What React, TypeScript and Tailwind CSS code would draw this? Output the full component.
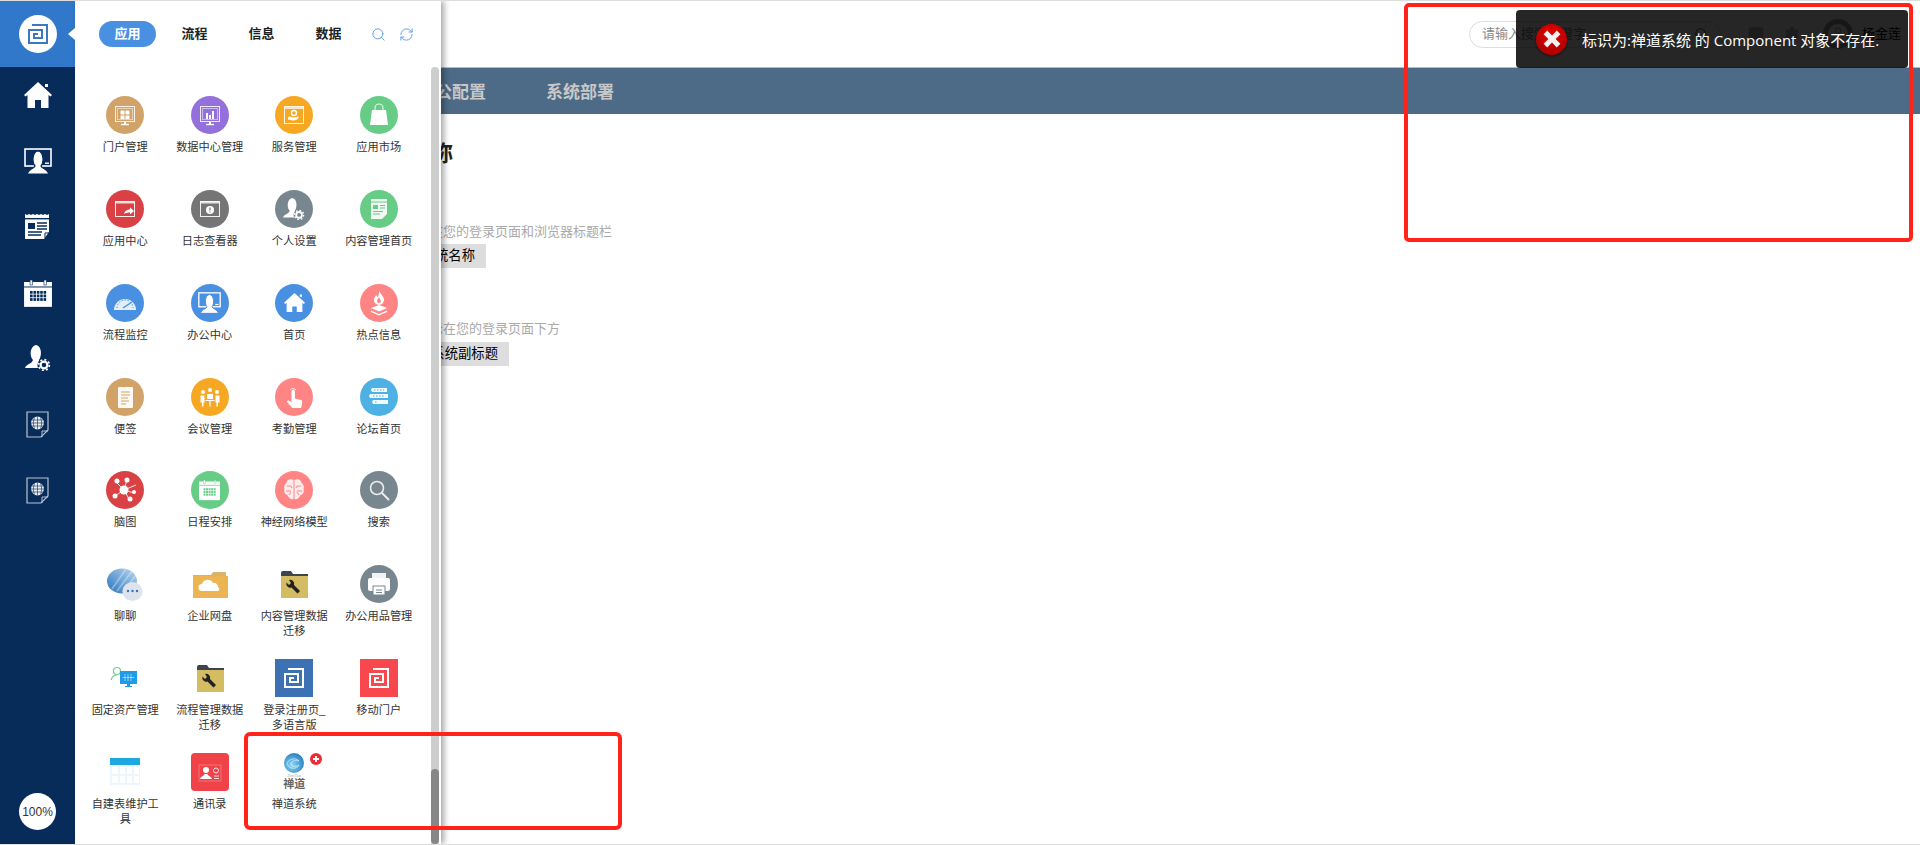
import React from 'react';
import { RefreshCw, Search, Settings, MessageSquare, User } from 'lucide-react';

const font = 'font-["Liberation_Sans","Noto_Sans_CJK_SC",sans-serif]';

function Spiral({ color = '#3a78c3', size = 22, width = 2 }: { color?: string; size?: number; width?: number }) {
  return (
    <svg width={size} height={size} viewBox="0 0 22 22" fill="none" stroke={color} strokeWidth={width}>
      <path d="M5 2 H20 V20 H2 V7 H15 V15 H7 V11 H11" />
    </svg>
  );
}

function HomeIcon({ size = 28 }: { size?: number }) {
  return (
    <svg width={size} height={size * 0.93} viewBox="0 0 28 26" fill="#fff">
      <path d="M14 0 L0 13 L1.5 14.5 L3.5 13 V26 H11 V18 H17 V26 H24.5 V13 L26.5 14.5 L28 13 Z" />
      <rect x="21" y="2" width="3" height="3" />
    </svg>
  );
}

function MonitorUser({ size = 28, cut }: { size?: number; cut: string }) {
  return (
    <svg width={size} height={size * 0.93} viewBox="0 0 28 26">
      <rect x="1" y="1" width="26" height="17" fill="none" stroke="#fff" strokeWidth="1.6" />
      <path d="M3 26 C4 21 10 21 11 18 C8 15 8 4 14 3 C20 4 20 15 17 18 C18 21 24 21 25 26 Z" fill="#fff" stroke={cut} strokeWidth="1.2" />
      <rect x="21" y="14.5" width="4" height="1.4" fill="#fff" />
    </svg>
  );
}

function Newspaper({ size = 26, cut }: { size?: number; cut: string }) {
  return (
    <svg width={size} height={size * 0.96} viewBox="0 0 26 25">
      <path d="M0 0 l2 1 2-1 2 1 2-1 2 1 2-1 2 1 2-1 2 1 2-1 2 1 2-1 V18 L19 25 H0 Z" fill="#fff" />
      <rect x="0" y="4" width="26" height="1.4" fill={cut} />
      <rect x="3" y="9" width="7" height="6" fill={cut} />
      <path d="M12 9h10M12 12h10M12 15h10M3 18h14M3 21h13" stroke={cut} strokeWidth="1.4" />
      <path d="M20 24 V19 H25" fill="none" stroke={cut} strokeWidth="1" />
    </svg>
  );
}

function CalendarIcon({ size = 28, cut }: { size?: number; cut: string }) {
  const cells: React.ReactNode[] = [];
  for (let r = 0; r < 3; r++) {
    for (let c = 0; c < 5; c++) {
      cells.push(<rect key={`${r}-${c}`} x={6 + c * 3.4} y={11 + r * 3.6} width="2.6" height="2.8" fill={cut} />);
    }
  }
  return (
    <svg width={size} height={size * 0.96} viewBox="0 0 28 27">
      <rect x="0" y="2" width="28" height="25" fill="#fff" />
      <rect x="0" y="6.5" width="28" height="1" fill={cut} />
      <rect x="6" y="0" width="2.4" height="5" fill="#fff" stroke={cut} strokeWidth=".6" />
      <rect x="20" y="0" width="2.4" height="5" fill="#fff" stroke={cut} strokeWidth=".6" />
      {cells}
    </svg>
  );
}

function UserGear({ size = 26, cut }: { size?: number; cut: string }) {
  return (
    <svg width={size} height={size} viewBox="0 0 26 26">
      <path d="M0 23 C1 19 7 19 8 15 C4 11 5 1 11 0 C17 1 17 11 14 15 L16 23 Z" fill="#fff" />
      <circle cx="19" cy="20" r="6.6" fill={cut} />
      <circle cx="19" cy="20" r="3.4" fill="none" stroke="#fff" strokeWidth="2.2" />
      <circle cx="19" cy="20" r="5.4" fill="none" stroke="#fff" strokeWidth="1.6" strokeDasharray="2 2.2" />
    </svg>
  );
}

function DocGlobe() {
  return (
    <svg width="23" height="27" viewBox="0 0 23 27" fill="none">
      <path d="M1 1 H22 V19 L15 26 H1 Z" stroke="#b9c3d0" strokeWidth="1.2" />
      <path d="M16 26 V20 H22" stroke="#b9c3d0" strokeWidth="1" />
      <circle cx="11.5" cy="12" r="6.4" fill="#e6ebf0" />
      <path d="M5 12h13M6 9h11M6 15h11M11.5 5.5v13M8.5 6.5c-1.500 3-1.500 8 0 11M14.500 6.500c1.500 3 1.500 8 0 11" stroke="#072c5a" strokeWidth=".6" />
    </svg>
  );
}

function Glyph({ children }: { children: React.ReactNode }) {
  return (
    <svg width="38" height="38" viewBox="0 0 38 38" fill="none">
      {children}
    </svg>
  );
}

function Round({ bg, children }: { bg: string; children: React.ReactNode }) {
  return <div className={`w-[38px] h-[38px] rounded-full flex items-center justify-center ${bg}`}>{children}</div>;
}

const monitor = (
  <>
    <rect x="9.500" y="10.500" width="19" height="15" stroke="#fff" strokeOpacity=".85" />
    <rect x="11.500" y="12.500" width="15" height="11" stroke="#fff" strokeOpacity=".5" />
    <path d="M15 28.500h8" stroke="#fff" strokeWidth="1.400" />
    <path d="M18 26h2v2h-2z" fill="#fff" />
  </>
);

const windowFrame = (
  <>
    <rect x="9.500" y="11.500" width="19" height="15" stroke="#fff" strokeOpacity=".9" />
    <rect x="9.500" y="11.500" width="19" height="2" fill="#fff" fillOpacity=".8" />
  </>
);

const items: { label: string; icon: React.ReactNode }[] = [
  {
    label: '门户管理',
    icon: (
      <Round bg="bg-[#d2a369]">
        <Glyph>
          {monitor}
          <path d="M14.500 14.500h4v4h-4zM19.500 14.500h4v4h-4zM14.500 19.500h4v3.500h-4zM19.500 19.500h4v3.500h-4z" fill="#fff" />
        </Glyph>
      </Round>
    ),
  },
  {
    label: '数据中心管理',
    icon: (
      <Round bg="bg-[#9370db]">
        <Glyph>
          {monitor}
          <path d="M15 17h2v6h-2zM18 19h2v4h-2zM21 15h2v8h-2z" fill="#fff" />
        </Glyph>
      </Round>
    ),
  },
  {
    label: '服务管理',
    icon: (
      <Round bg="bg-[#f7a823]">
        <Glyph>
          <rect x="9.500" y="10.500" width="19" height="17" stroke="#fff" strokeOpacity=".9" />
          <path d="M9.500 11h19v2h-19z" fill="#fff" fillOpacity=".7" />
          <circle cx="19" cy="17" r="2.500" stroke="#fff" strokeWidth="1.400" />
          <path d="M13 21c2-1.500 4 .5 6 .5s3-1 5-1c-1 3-3 4-6 4-2 0-3-1-5-1z" fill="#fff" />
        </Glyph>
      </Round>
    ),
  },
  {
    label: '应用市场',
    icon: (
      <Round bg="bg-[#67cd86]">
        <Glyph>
          <path d="M12 14h14l2 15H10z" fill="#fff" />
          <path d="M15 16v-4a4 4 0 0 1 8 0v4" stroke="#fff" strokeOpacity=".8" strokeWidth="1.200" />
        </Glyph>
      </Round>
    ),
  },
  {
    label: '应用中心',
    icon: (
      <Round bg="bg-[#d94144]">
        <Glyph>
          {windowFrame}
          <path d="M18 24c.5-3 3-4.500 6-4.500V17.500l4 3.500-4 3.500v-2c-2.500 0-4 .5-6 1.500z" fill="#fff" />
        </Glyph>
      </Round>
    ),
  },
  {
    label: '日志查看器',
    icon: (
      <Round bg="bg-[#757575]">
        <Glyph>
          {windowFrame}
          <circle cx="19" cy="20" r="4" fill="#fff" />
          <path d="M19 17.500v3M19 21.500v1" stroke="#757575" strokeWidth="1.200" />
        </Glyph>
      </Round>
    ),
  },
  {
    label: '个人设置',
    icon: (
      <Round bg="bg-[#78878f]">
        <UserGear size={22} cut="#78878f" />
      </Round>
    ),
  },
  {
    label: '内容管理首页',
    icon: (
      <Round bg="bg-[#67cd86]">
        <Glyph>
          <path d="M11 9h16v15l-5 5H11z" fill="#fff" fillOpacity=".9" />
          <path d="M11 12h16" stroke="#67cd86" />
          <rect x="13" y="15" width="5" height="4" fill="#67cd86" />
          <path d="M20 15.500h5M20 18h5M13 21.500h10M13 24h7" stroke="#67cd86" />
        </Glyph>
      </Round>
    ),
  },
  {
    label: '流程监控',
    icon: (
      <Round bg="bg-[#4a90e2]">
        <Glyph>
          <path d="M8 26a11 11 0 1 1 22 0z" fill="#fff" fillOpacity=".85" />
          <path d="M11 24a8 8 0 0 1 16 0" stroke="#4a90e2" strokeDasharray="1.500 1.500" />
          <path d="M17 24l9-6" stroke="#4a90e2" strokeWidth="1.500" />
        </Glyph>
      </Round>
    ),
  },
  {
    label: '办公中心',
    icon: (
      <Round bg="bg-[#4a90e2]">
        <MonitorUser size={23} cut="#4a90e2" />
      </Round>
    ),
  },
  {
    label: '首页',
    icon: (
      <Round bg="bg-[#4a90e2]">
        <HomeIcon size={21} />
      </Round>
    ),
  },
  {
    label: '热点信息',
    icon: (
      <Round bg="bg-[#ff8585]">
        <Glyph>
          <path d="M19 6c1 4 5 6 5 10a5 5 0 0 1-10 0c0-2 1-3 2-5 1 1 1 2 2 2 1-2 1-5 1-7z" fill="#fff" />
          <path d="M19 13c.5 2 2 3 2 4a2 2 0 0 1-4 0c0-1.500 1.500-2.500 2-4z" fill="#ff8585" />
          <path d="M11 24l8-3 8 3-8 3.500z" fill="#fff" />
          <path d="M11 26.500l8 3.500 8-3.500v1.500l-8 3.500-8-3.500z" fill="#fff" />
        </Glyph>
      </Round>
    ),
  },
  {
    label: '便签',
    icon: (
      <Round bg="bg-[#d2a369]">
        <Glyph>
          <rect x="12" y="9" width="15" height="21" rx="1" fill="#fff" fillOpacity=".92" />
          <path d="M15 14h9M15 17h9M15 20h7M15 23h8M15 26h5" stroke="#d2a369" strokeWidth="1.200" />
        </Glyph>
      </Round>
    ),
  },
  {
    label: '会议管理',
    icon: (
      <Round bg="bg-[#f7a823]">
        <Glyph>
          <circle cx="19" cy="12" r="2" fill="#fff" />
          <circle cx="12" cy="14" r="2" fill="#fff" />
          <circle cx="26" cy="14" r="2" fill="#fff" />
          <path d="M16 16h6v5h-6zM9.500 17.500h4v7h-1v4h-1.500v-4h-1.500zM24.500 17.500h4v7h-1.500v4h-1.500v-4h-1z" fill="#fff" />
          <path d="M14.500 22.500h9M19 22.500v6" stroke="#fff" strokeWidth="1.200" />
        </Glyph>
      </Round>
    ),
  },
  {
    label: '考勤管理',
    icon: (
      <Round bg="bg-[#ff8585]">
        <Glyph>
          <path d="M15 12a4 4 0 0 1 6 0" stroke="#fff" strokeOpacity=".8" />
          <path d="M16.500 13.500a1.700 1.700 0 0 1 3.400 0v7l6 1.500c1 .3 1.500 1 1.300 2l-1 6h-9l-5.500-6.500 1.500-1.200 3.300 2z" fill="#fff" />
        </Glyph>
      </Round>
    ),
  },
  {
    label: '论坛首页',
    icon: (
      <Round bg="bg-[#4eb1e4]">
        <Glyph>
          <path d="M12 10h15v4H12l-1-2zM10 16h18v4H10l-1-2zM13 22h15v4H13l-1-2z" fill="#fff" fillOpacity=".92" />
          <path d="M14 12h10M13 18h12M15 24h3" stroke="#4eb1e4" strokeDasharray="1.500 1.500" />
        </Glyph>
      </Round>
    ),
  },
  {
    label: '脑图',
    icon: (
      <Round bg="bg-[#d94144]">
        <Glyph>
          <path d="M18 19L10 11M18 19L21 9M18 19L30 14M18 19L9 25M18 19L23 28M18 19L28 22" stroke="#fff" strokeOpacity=".85" />
          <circle cx="18" cy="19" r="4.500" fill="#fff" />
          <circle cx="11" cy="10" r="2.500" fill="#fff" />
          <circle cx="21" cy="9" r="2.500" fill="#fff" />
          <circle cx="9" cy="25" r="2.500" fill="#fff" />
          <circle cx="24" cy="28" r="2.500" fill="#fff" />
          <circle cx="28" cy="21" r="2" fill="#fff" />
        </Glyph>
      </Round>
    ),
  },
  {
    label: '日程安排',
    icon: (
      <Round bg="bg-[#67cd86]">
        <CalendarIcon size={21} cut="#67cd86" />
      </Round>
    ),
  },
  {
    label: '神经网络模型',
    icon: (
      <Round bg="bg-[#ff8585]">
        <Glyph>
          <path d="M18.500 9c-3-2-7 0-7 3-2 1-3 4-2 6-1 3 1 6 3 6 1 3 4 5 6 4zM19.500 9c3-2 7 0 7 3 2 1 3 4 2 6 1 3-1 6-3 6-1 3-4 5-6 4z" fill="#fff" fillOpacity=".85" />
          <path d="M12 15h4l1 2M11 20h5M14 24l2-3M26 15h-4l-1 2M27 20h-5M24 24l-2-3" stroke="#ff8585" />
        </Glyph>
      </Round>
    ),
  },
  {
    label: '搜索',
    icon: (
      <Round bg="bg-[#78878f]">
        <Glyph>
          <circle cx="17" cy="17" r="6.500" stroke="#fff" strokeOpacity=".85" strokeWidth="1.600" />
          <path d="M22 22l7 7" stroke="#fff" strokeOpacity=".85" strokeWidth="2" />
        </Glyph>
      </Round>
    ),
  },
  {
    label: '聊聊',
    icon: (
      <svg width="38" height="38" viewBox="0 0 38 38">
        <defs>
          <linearGradient id="chatBlue" x1="0" y1="1" x2="1" y2="0">
            <stop offset="0" stopColor="#2b74bd" />
            <stop offset="1" stopColor="#b6d8ef" />
          </linearGradient>
        </defs>
        <ellipse cx="16" cy="16" rx="15" ry="12.500" fill="url(#chatBlue)" />
        <path d="M6 24L20 4M11 26L26 6M17 27L30 10" stroke="#fff" strokeOpacity=".35" strokeWidth="1.500" />
        <ellipse cx="26.500" cy="26.500" rx="10" ry="9.500" fill="#dfe4ec" />
        <circle cx="22" cy="26" r="1.200" fill="#2b74bd" />
        <circle cx="26.500" cy="26" r="1.200" fill="#2b74bd" />
        <circle cx="31" cy="26" r="1.200" fill="#2b74bd" />
      </svg>
    ),
  },
  {
    label: '企业网盘',
    icon: (
      <svg width="38" height="38" viewBox="0 0 38 38">
        <path d="M2 10h18l2-3h13v26H2z" fill="#d9b26b" />
        <rect x="2" y="11" width="35" height="22" fill="#ecb452" />
        <path d="M11 26a3.500 3.500 0 0 1 0-7 6 6 0 0 1 11-1 4 4 0 0 1 5 4 2.200 2.200 0 0 1 0 4z" fill="#fff" />
      </svg>
    ),
  },
  { label: '内容管理数据迁移', icon: <WrenchFolder /> },
  {
    label: '办公用品管理',
    icon: (
      <Round bg="bg-[#78878f]">
        <Glyph>
          <path d="M12 8h14v6H12z" fill="#fff" fillOpacity=".9" />
          <rect x="8" y="13" width="22" height="13" rx="2" fill="#fff" />
          <rect x="13" y="21" width="12" height="9" fill="#fff" stroke="#78878f" />
          <path d="M16 25h6M16 27.500h6" stroke="#78878f" />
        </Glyph>
      </Round>
    ),
  },
  {
    label: '固定资产管理',
    icon: (
      <svg width="38" height="38" viewBox="0 0 38 38" fill="none">
        <circle cx="11" cy="12" r="3.500" stroke="#70d08c" strokeWidth="1.200" />
        <path d="M5 21c1-3 3-5 6-5" stroke="#70d08c" strokeWidth="1.200" />
        <rect x="14" y="12" width="17" height="13" fill="#1e9be8" />
        <path d="M19 15v7M22 15v7M25 15v7M16.500 18.500h12" stroke="#fff" strokeOpacity=".5" />
        <path d="M21 25h3v2h-3zM19 27h7v1h-7z" fill="#1e9be8" />
      </svg>
    ),
  },
  { label: '流程管理数据迁移', icon: <WrenchFolder /> },
  {
    label: '登录注册页_多语言版',
    icon: (
      <div className="w-[38px] h-[38px] bg-[#3c72b4] flex items-center justify-center">
        <Spiral color="#fff" />
      </div>
    ),
  },
  {
    label: '移动门户',
    icon: (
      <div className="w-[38px] h-[38px] bg-[#f9474e] flex items-center justify-center">
        <Spiral color="#fff" />
      </div>
    ),
  },
  {
    label: '自建表维护工具',
    icon: (
      <svg width="38" height="38" viewBox="0 0 38 38">
        <rect x="4" y="5" width="30" height="27" fill="#eef6fb" />
        <rect x="4" y="5" width="30" height="7" fill="#1ea7e0" />
        <path d="M6 14h6v7H6zM14 14h5v7h-5zM21 14h5v7h-5zM28 14h5v7h-5zM6 23h6v7H6zM14 23h5v7h-5zM21 23h5v7h-5zM28 23h5v7h-5z" fill="#fff" />
      </svg>
    ),
  },
  {
    label: '通讯录',
    icon: (
      <div className="w-[38px] h-[38px] bg-[#ef4349] rounded-sm flex items-center justify-center">
        <svg width="38" height="38" viewBox="0 0 38 38" fill="none">
          <rect x="8" y="12" width="22" height="16" fill="#fff" fillOpacity="0" stroke="#fff" strokeOpacity=".25" />
          <circle cx="15" cy="17" r="3" fill="#fff" />
          <path d="M9 26c1-3 4-3 4.500-5h3c.5 2 3.500 2 4.500 5z" fill="#fff" />
          <circle cx="25" cy="17.500" r="2.500" stroke="#fff" strokeOpacity=".8" />
          <path d="M23 23h5M23 25.500h5" stroke="#fff" strokeOpacity=".8" />
        </svg>
      </div>
    ),
  },
  {
    label: '禅道系统',
    icon: (
      <div className="relative w-[38px] h-[38px] flex flex-col items-center">
        <svg width="20" height="20" viewBox="0 0 20 20" fill="none">
          <defs>
            <radialGradient id="zenBlue" cx=".4" cy=".6" r=".7">
              <stop offset="0" stopColor="#8fd6f2" />
              <stop offset="1" stopColor="#1a78bd" />
            </radialGradient>
          </defs>
          <circle cx="10" cy="10" r="10" fill="url(#zenBlue)" />
          <path d="M3 11c1-5 8-7 12-3-4-1-8 0-8 3s5 3 8 1c-2 4-9 5-12-1z" stroke="#fff" strokeOpacity=".55" />
        </svg>
        <span className="text-[4px] leading-[6px] text-[#aaa]">ZenTao</span>
        <span className="text-[11px] leading-[11px] font-bold text-[#666]">禅道</span>
        <div className="absolute top-0 left-[35px] w-[12px] h-[12px] rounded-full bg-[#ef2b36] flex items-center justify-center">
          <svg width="8" height="8" viewBox="0 0 8 8">
            <path d="M4 1v6M1 4h6" stroke="#fff" strokeWidth="1.800" />
          </svg>
        </div>
      </div>
    ),
  },
];

function WrenchFolder() {
  return (
    <svg width="38" height="38" viewBox="0 0 38 38">
      <path d="M6 8a2 2 0 0 1 2-2h8l2 3h15v4H6z" fill="#3c4450" />
      <rect x="6" y="11" width="27" height="22" fill="#d4bc63" />
      <path d="M14 15a4 4 0 0 1 5 5l6 6-2.500 2.500-6-6a4 4 0 0 1-5-5l2.500 2.500 2-2z" fill="#222" />
    </svg>
  );
}

function Sidebar() {
  const cut = '#072c5a';
  return (
    <aside className="w-[75px] shrink-0 h-full flex flex-col bg-[#072c5a]">
      <div className="h-[66px] bg-[#3178cb] flex items-center justify-center shrink-0">
        <div className="w-[38px] h-[38px] rounded-full bg-white flex items-center justify-center">
          <Spiral />
        </div>
      </div>
      <nav className="flex-1 flex flex-col items-center pt-[15px]">
        <div className="h-[66px]"><HomeIcon /></div>
        <div className="h-[66px]"><MonitorUser cut={cut} /></div>
        <div className="h-[66px]"><Newspaper cut={cut} /></div>
        <div className="h-[65px]"><CalendarIcon cut={cut} /></div>
        <div className="h-[66px]"><UserGear cut={cut} /></div>
        <div className="h-[66px]"><DocGlobe /></div>
        <div className="h-[66px]"><DocGlobe /></div>
      </nav>
      <div className="pb-[14px] flex justify-center">
        <div className="w-[37px] h-[37px] rounded-full bg-white flex items-center justify-center text-[12px] text-[#333]">100%</div>
      </div>
    </aside>
  );
}

function AppPanel() {
  return (
    <div className="absolute left-[75px] top-0 bottom-0 w-[366px] bg-white shadow-[3px_0_6px_rgba(0,0,0,0.35)] overflow-hidden">
      <div className="h-[66px] flex items-center text-[13px] font-bold text-[#222] pl-[24px]">
        <span className="w-[57px] h-[26px] rounded-full bg-[#4a90e2] text-white flex items-center justify-center">应用</span>
        <span className="w-[67px] text-center ml-[5px]">流程</span>
        <span className="w-[67px] text-center">信息</span>
        <span className="w-[67px] text-center">数据</span>
        <Search className="ml-[9px] text-[#5b9ae6]" size={15} strokeWidth={1.5} />
        <RefreshCw className="ml-[13px] text-[#5b9ae6]" size={15} strokeWidth={1.5} />
      </div>
      <div className="grid grid-cols-[repeat(4,84.500px)] auto-rows-[93.860px] pl-[8px] pt-[29px]">
        {items.map((item) => (
          <div key={item.label} className="flex flex-col items-center">
            {item.icon}
            <div className="mt-[6px] w-[72px] text-center text-[11.200px] leading-[15px] text-[#333]">{item.label}</div>
          </div>
        ))}
      </div>
      <div className="absolute right-[2px] top-[66px] bottom-0 w-[8px] rounded-t-[4px] bg-[#cdcdcd]">
        <div className="absolute left-0 right-0 bottom-0 h-[75px] rounded-[4px] bg-[#878787]" />
      </div>
    </div>
  );
}

export default function App() {
  return (
    <div className={`relative w-full h-[845px] overflow-hidden bg-white border-t border-b border-[#ddd] flex ${font}`}>
      <Sidebar />
      <main className="flex-1 min-w-0 flex flex-col">
        <header className="h-[67px] shrink-0 flex items-center justify-end pr-[19px] border-b border-[#bbb]">
          <div className="w-[252px] h-[27px] rounded-full border border-[#ddd] flex items-center justify-between px-[12px] text-[13px] text-[#888]">
            <span>请输入搜索关键字</span>
            <Search size={14} className="text-[#555]" />
          </div>
          <MessageSquare className="ml-[27px] text-[#bbb]" size={16} fill="#bbb" />
          <Settings className="ml-[20px] text-[#bbb]" size={16} fill="#bbb" />
          <div className="ml-[23px] w-[30px] h-[30px] rounded-full border-[5px] border-[#999] flex items-center justify-center">
            <User size={16} className="text-[#bbb]" />
          </div>
          <span className="ml-[9px] text-[13px] text-black">杨金莲</span>
        </header>
        <div className="h-[46px] shrink-0 bg-[#4d6b87] flex items-center gap-[60px] pl-[343px] pt-[4px] text-[17px] font-bold text-[#c8c8c8]">
          <span>办公配置</span>
          <span>系统部署</span>
        </div>
        <section className="pl-[290px] pt-[25px] flex flex-col items-start">
          <h2 className="text-[22px] leading-[30px] font-bold text-[#222]">系统名称</h2>
          <p className="mt-[54px] text-[13px] leading-[18px] text-[#aaa]">名称将显示在您的登录页面和浏览器标题栏</p>
          <button className="mt-[3px] w-[121px] h-[24px] pr-[11px] text-right text-[13.330px] bg-[#ddd] text-black">修改系统名称</button>
          <p className="mt-[52px] text-[13px] leading-[18px] text-[#aaa]">副标题将显示在您的登录页面下方</p>
          <button className="mt-[4px] w-[144px] h-[24px] pr-[11px] text-right text-[13.330px] bg-[#ddd] text-black">修改系统副标题</button>
        </section>
      </main>
      <AppPanel />
      {/* notch of the logo cell */}
      <div className="absolute left-[68px] top-[27px] w-0 h-0 border-y-[6px] border-y-transparent border-r-[7px] border-r-white" />
      {/* toast */}
      <div className="absolute left-[1516px] top-[9px] w-[392px] h-[58px] rounded-[4px] bg-black/85 flex items-center pl-[20px] text-white">
        <div className="w-[31px] h-[31px] rounded-full bg-[radial-gradient(circle_at_50%_30%,#e60000,#9c0000)] flex items-center justify-center shadow-[0_1px_2px_rgba(0,0,0,0.6)]">
          <svg width="24" height="24" viewBox="0 0 20 20">
            <path d="M3 6l3-3 4 4 4-4 3 3-4 4 4 4-3 3-4-4-4 4-3-3 4-4z" fill="#f2f2f2" />
          </svg>
        </div>
        <span className='ml-[15px] mt-[3px] text-[15px] font-["Open_Sans","Noto_Sans_CJK_SC",sans-serif]'>标识为:禅道系统 的 Component 对象不存在.</span>
      </div>
      {/* red annotations */}
      <div className="absolute left-[1404px] top-[2px] w-[509px] h-[239px] rounded-[5px] border-4 border-[#ff2319]" />
      <div className="absolute left-[244px] top-[731px] w-[378px] h-[98px] rounded-[6px] border-4 border-[#ff2319]" />
    </div>
  );
}
